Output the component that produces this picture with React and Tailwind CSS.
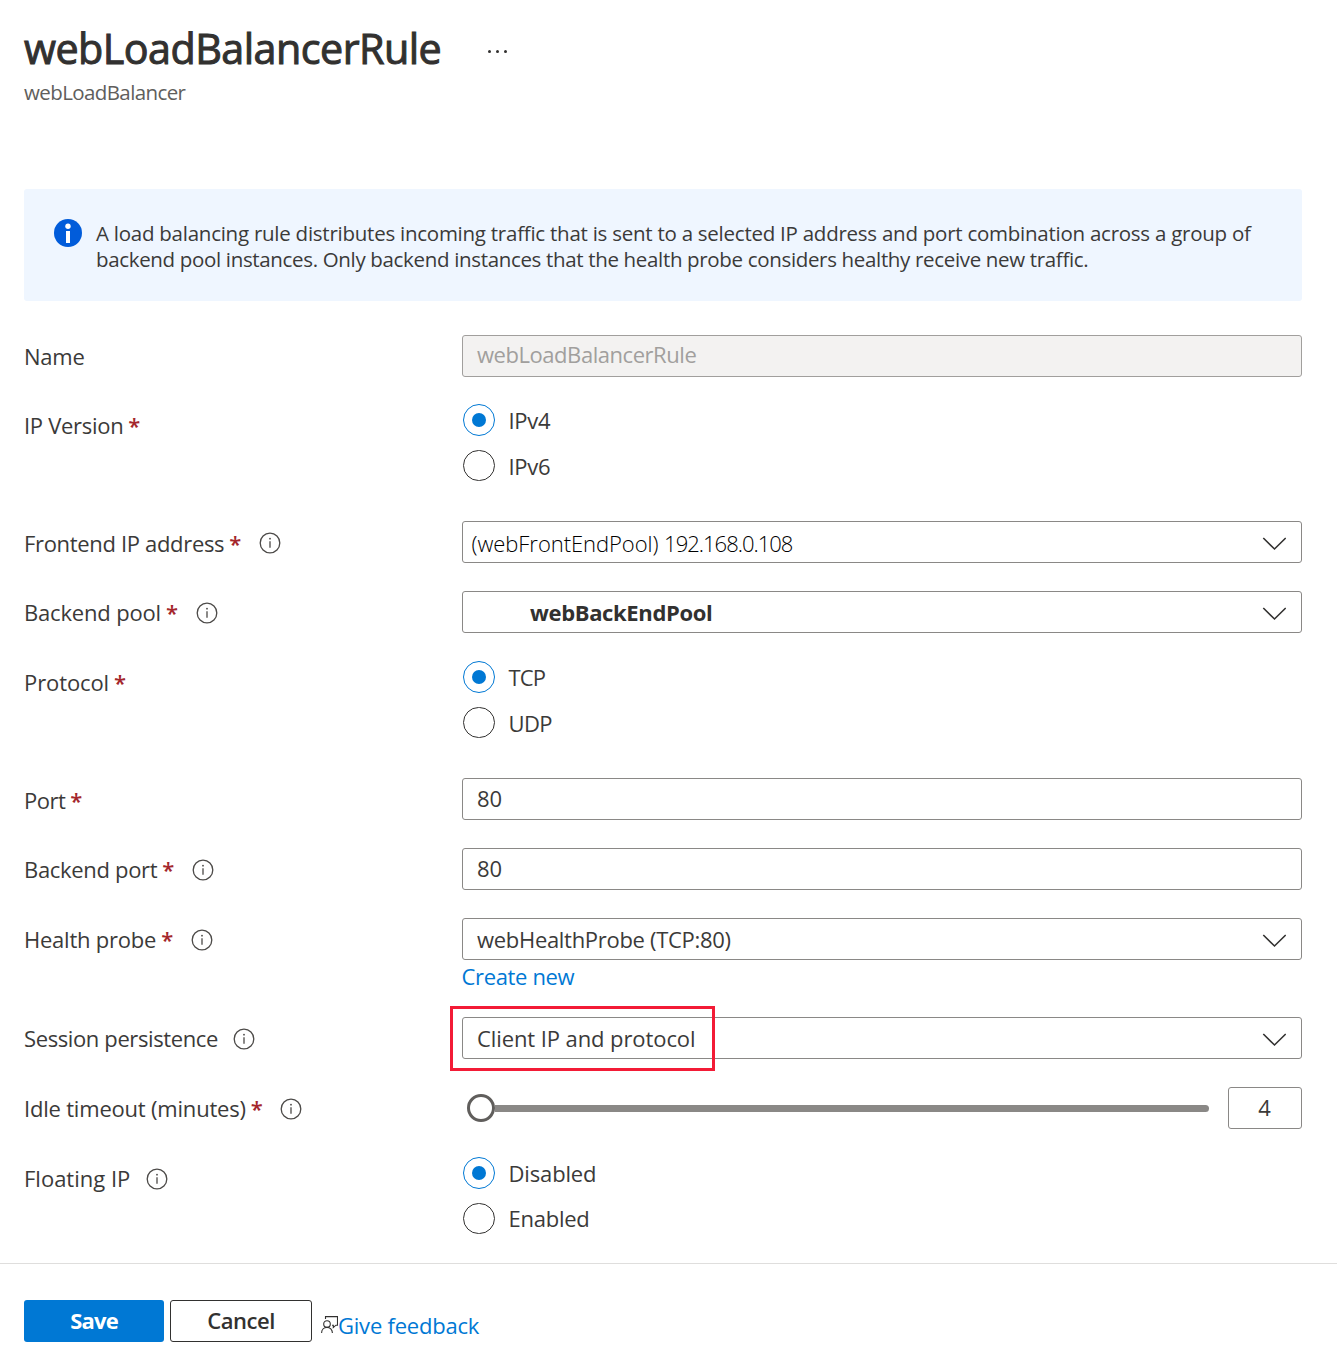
import React from "react";

function InfoIcon() {
  return (
    <svg className="size-[22px] shrink-0" viewBox="0 0 22 22" fill="none">
      <circle cx="11" cy="11" r="9.8" stroke="#4c4a48" strokeWidth="1.3" />
      <path d="M11 9.2v6.6" stroke="#4c4a48" strokeWidth="1.3" />
      <circle cx="11" cy="6.7" r="0.9" fill="#4c4a48" />
    </svg>
  );
}

function Chevron() {
  return (
    <svg className="h-[14px] w-[24px] shrink-0" viewBox="0 0 24 14" fill="none">
      <path d="M1.3 1 12.500 12 23.700 1" stroke="#323130" strokeWidth="1.6" />
    </svg>
  );
}

function Row({ label, tracking = "", required, info, height, labelPad = "pt-[6px]", children }) {
  return (
    <div className={`flex items-start ${height}`}>
      <div className="flex h-[43px] w-[438px] shrink-0 items-start">
        <span className={`whitespace-nowrap ${labelPad} ${tracking}`}>{label}</span>
        {required && (
          <span className={`ml-[5px] w-[11px] font-semibold text-[#a4262c] ${labelPad}`}>*</span>
        )}
        {info && (
          <span className={`pt-[11px] ${required ? "ml-[18.5px]" : "ml-[15.5px]"}`}>
            <InfoIcon />
          </span>
        )}
      </div>
      <div className="w-[840px]">{children}</div>
    </div>
  );
}

const BOX = "flex h-[42px] rounded-[3px] border border-[#8a8886] whitespace-nowrap";

function TextBox({ children }) {
  return <div className={`${BOX} bg-white pl-[14px] leading-[38px]`}>{children}</div>;
}

function Dropdown({ children, className = "pl-[14px] leading-[41px]" }) {
  return (
    <div className={`${BOX} justify-between bg-white pr-[15px] ${className}`}>
      <span>{children}</span>
      <span className="pt-[15px]">
        <Chevron />
      </span>
    </div>
  );
}

function Radio({ label, checked, tracking, leading = "leading-[33px]" }) {
  return (
    <div className="flex h-[45px] items-start pl-px">
      <span
        className={`flex w-[32px] items-center justify-center rounded-full border ${
          checked ? "h-[32px] border-[#0078d4]" : "mt-[0.5px] h-[31.5px] border-[#323130]"
        }`}
      >
        {checked && <span className="size-[14px] rounded-full bg-[#0078d4]" />}
      </span>
      <span className={`ml-[13.500px] ${leading} ${tracking}`}>{label}</span>
    </div>
  );
}

export default function App() {
  return (
    <div className="h-[1368px] w-[1337px] overflow-hidden bg-white font-['Open_Sans','Noto_Sans',sans-serif] text-[22px] leading-[30px] text-[#3b3a39]">
      <header className="h-[189px] pl-6 pt-[20px]">
        <div className="flex h-[57px] items-center">
          <h1 className="w-[417px] text-[41.3px] leading-[57px] font-normal tracking-[-0.55px] whitespace-nowrap text-[#323130] [-webkit-text-stroke:1px_#323130]">
            webLoadBalancerRule
          </h1>
          <div className="mt-[5px] ml-[47px] flex gap-[5px]">
            <span className="size-[3px] rounded-full bg-[#323130]" />
            <span className="size-[3px] rounded-full bg-[#323130]" />
            <span className="size-[3px] rounded-full bg-[#323130]" />
          </div>
        </div>
        <p className="text-[20.5px] leading-[30px] tracking-[-0.6px] text-[#605e5c]">webLoadBalancer</p>
      </header>

      <section className="ml-6 flex h-[112px] w-[1278px] rounded-[3px] bg-[#eff6ff] pl-[30px] pt-[30px]">
        <svg className="size-[28px] shrink-0" viewBox="0 0 28 28">
          <circle cx="14" cy="14" r="14" fill="#015cda" />
          <circle cx="14" cy="7.3" r="2.7" fill="#fff" />
          <rect x="12" y="12" width="4" height="12" fill="#fff" />
        </svg>
        <p className="ml-[14px] mt-[1px] text-[20.5px] leading-[26px] whitespace-nowrap">
          <span className="block tracking-[-0.25px]">
            A load balancing rule distributes incoming traffic that is sent to a selected IP address and port combination across a group of
          </span>
          <span className="block tracking-[-0.335px]">
            backend pool instances. Only backend instances that the health probe considers healthy receive new traffic.
          </span>
        </p>
      </section>

      <main className="h-[962px] pl-6 pt-[34px]">
        <Row label="Name" tracking="tracking-[-0.22px]" height="h-[69px]">
          <div className="flex h-[42px] rounded-[3px] border border-[#a19f9d] bg-[#f3f2f1] pl-[14px] leading-[37px] tracking-[-0.45px] text-[#a19f9d]">
            webLoadBalancerRule
          </div>
        </Row>
        <Row label="IP Version" tracking="tracking-[-0.3px]" required height="h-[117px]">
          <Radio label="IPv4" checked tracking="tracking-[-0.3px]" />
          <Radio label="IPv6" tracking="tracking-[-0.3px]" leading="leading-[35px]" />
        </Row>
        <Row label="Frontend IP address" tracking="tracking-[-0.33px]" required info height="h-[70px]" labelPad="pt-[7px]">
          <Dropdown className="pl-[8.5px] leading-[43px] font-light text-black">
            <span className="tracking-[-0.05px]">(webFrontEndPool) </span>
            <span className="tracking-[-1px]">192.168.0.108</span>
          </Dropdown>
        </Row>
        <Row label="Backend pool" tracking="tracking-[-0.17px]" required info height="h-[70px]">
          <Dropdown className="pl-[67px] leading-[41px] font-bold tracking-[-0.35px] text-[#323130]">
            webBackEndPool
          </Dropdown>
        </Row>
        <Row label="Protocol" tracking="tracking-[-0.1px]" required height="h-[117px]">
          <Radio label="TCP" checked tracking="tracking-[-0.9px]" />
          <Radio label="UDP" tracking="tracking-[-0.6px]" leading="leading-[35px]" />
        </Row>
        <Row label="Port" tracking="tracking-[-0.5px]" required height="h-[70px]" labelPad="pt-[7px]">
          <TextBox>80</TextBox>
        </Row>
        <Row label="Backend port" tracking="tracking-[-0.32px]" required info height="h-[70px]">
          <TextBox>80</TextBox>
        </Row>
        <Row label="Health probe" tracking="tracking-[-0.23px]" required info height="h-[99px]">
          <Dropdown className="pl-[14px] leading-[41px] tracking-[-0.3px]">webHealthProbe (TCP:80)</Dropdown>
          <a className="mt-[1px] -ml-[0.5px] block tracking-[-0.35px] text-[#0078d4]">Create new</a>
        </Row>
        <Row label="Session persistence" tracking="tracking-[-0.385px]" info height="h-[70px]">
          <div className="relative">
            <Dropdown className="pl-[14px] leading-[41px] tracking-[-0.09px]">Client IP and protocol</Dropdown>
            <div className="absolute -top-[11px] -left-[12px] h-[65px] w-[265px] border-[3px] border-[#f31b36]" />
          </div>
        </Row>
        <Row label="Idle timeout (minutes)" tracking="tracking-[-0.2px]" required info height="h-[70px]">
          <div className="flex items-center">
            <div className="flex h-[42px] w-[747px] items-center pl-[4.5px]">
              <span className="size-[28px] shrink-0 rounded-full border-[3px] border-[#605e5c] bg-white" />
              <span className="h-[7px] grow rounded-r-full bg-[#8a8886]" />
            </div>
            <div className={`${BOX} ml-[19px] w-[74px] justify-center pr-px leading-[38px]`}>4</div>
          </div>
        </Row>
        <Row label="Floating IP" info height="h-[106px]">
          <Radio label="Disabled" checked tracking="tracking-[-0.15px]" />
          <Radio label="Enabled" tracking="tracking-[-0.25px]" />
        </Row>
      </main>

      <footer className="flex h-[105px] items-start border-t border-[#dfdedd] pl-6 pt-[36px]">
        <button className="h-[42px] w-[140px] rounded-[3px] bg-[#0078d4] pb-[3px] font-bold tracking-[-0.8px] text-white">
          Save
        </button>
        <button className="ml-[6px] h-[42px] w-[142px] rounded-[3px] border border-[#323130] bg-white pb-[3px] font-semibold tracking-[-0.45px] text-[#323130]">
          Cancel
        </button>
        <svg className="mt-[16px] ml-[9px] size-[17px]" viewBox="0 0 17 17" fill="none" stroke="#323130" strokeWidth="1.1">
          <path d="M4.5 3V.6h12v8.6h-1.6l-2.6 2.4V9.2H11" />
          <circle cx="6" cy="8" r="3.3" />
          <path d="M.6 17c0-3.300 2.400-5.600 5.400-5.600s5.400 2.300 5.400 5.600" />
        </svg>
        <a className="mt-[10px] tracking-[-0.22px] text-[#0078d4]">Give feedback</a>
      </footer>
    </div>
  );
}
